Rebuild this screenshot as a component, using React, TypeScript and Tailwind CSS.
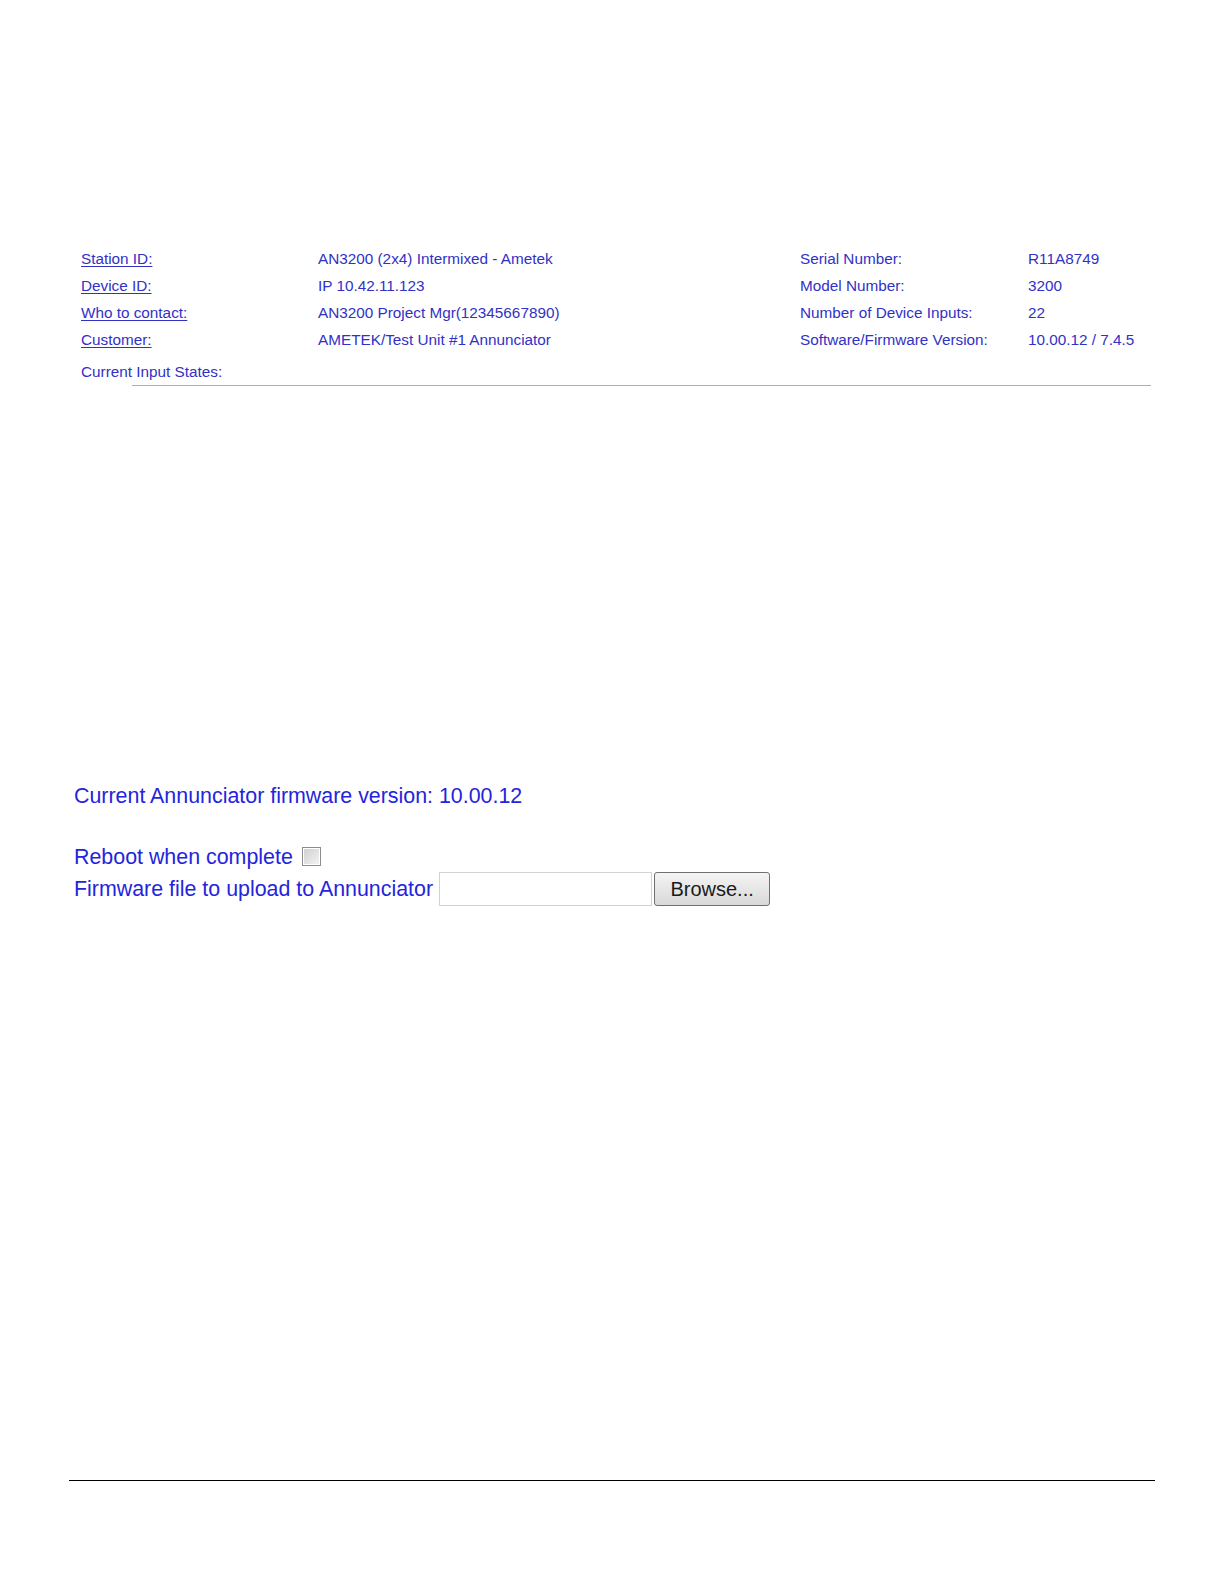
const leftRows = [
  { label: 'Station ID:', value: 'AN3200 (2x4) Intermixed - Ametek' },
  { label: 'Device ID:', value: 'IP 10.42.11.123' },
  { label: 'Who to contact:', value: 'AN3200 Project Mgr(12345667890)' },
  { label: 'Customer:', value: 'AMETEK/Test Unit #1 Annunciator' },
];

const rightRows = [
  { label: 'Serial Number:', value: 'R11A8749' },
  { label: 'Model Number:', value: '3200' },
  { label: 'Number of Device Inputs:', value: '22' },
  { label: 'Software/Firmware Version:', value: '10.00.12 / 7.4.5' },
];

export default function App() {
  return (
    <div className="w-[1224px] min-h-[1584px] bg-white flex flex-col font-['Liberation_Sans',Arial,sans-serif]">
      {/* device info table */}
      <div className="pt-[245px] pl-[81px] text-[15.3px] leading-[27px] text-[#3131c6]">
        {leftRows.map((row, i) => (
          <div key={row.label} className="flex">
            <a href="#" className="w-[237px] underline underline-offset-2">
              {row.label}
            </a>
            <span className="w-[482px]">{row.value}</span>
            <span className="w-[228px]">{rightRows[i].label}</span>
            <span>{rightRows[i].value}</span>
          </div>
        ))}
        <div className="mt-[5px]">Current Input States:</div>
      </div>
      <div className="ml-[132px] w-[1019px] h-px bg-[#a6a6ea]" />

      {/* firmware upload */}
      <div className="mt-[398px] pl-[74px] text-[21.4px] text-[#2424dc]">
        <div className="leading-[24px]">Current Annunciator firmware version: 10.00.12</div>
        <div className="mt-[35px] h-[29px] flex items-center">
          <span>Reboot when complete</span>
          <input
            type="checkbox"
            className="appearance-none ml-[9px] -mt-[2px] w-[19px] h-[19px] border border-[#8c8c8c] shadow-[inset_0_0_0_1px_#ffffff] bg-linear-to-br from-[#cfcfcf] to-[#f4f4f4]"
          />
        </div>
        <div className="h-[34px] flex items-center">
          <span>Firmware file to upload to Annunciator</span>
          <input
            type="text"
            className="ml-[6px] w-[213px] h-[34px] border border-[#d2d2d2] bg-white outline-none"
          />
          <button className="ml-[2px] w-[116px] h-[34px] rounded-[3px] border border-[#707070] bg-linear-to-b from-[#f4f4f4] to-[#d9d9d9] text-[20px] text-[#1a1a1a] leading-none">
            Browse...
          </button>
        </div>
      </div>

      {/* page footer rule */}
      <div className="mt-[574px] ml-[69px] w-[1086px] h-px bg-black" />
    </div>
  );
}
